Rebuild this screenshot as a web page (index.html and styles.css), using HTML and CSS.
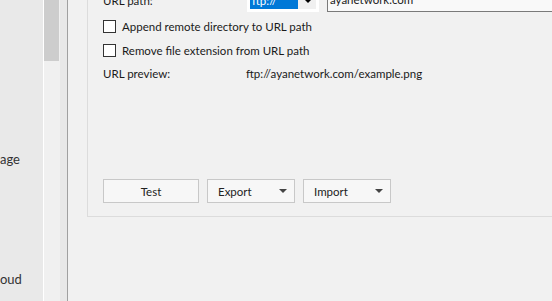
FILE: index.html
```html
<!DOCTYPE html>
<html lang="en">
<head>
    <meta charset="UTF-8">
    <meta name="viewport" content="width=device-width, initial-scale=1.0">
    <title>Uploader settings</title>
    <link rel="stylesheet" href="styles.css">
</head>
<body>
    <div class="window">
        <div class="sidebar">
            <div class="nav-item first">age</div>
            <div class="nav-item">oud</div>
        </div>
        <div class="scrollbar">
            <div class="thumb"></div>
        </div>
        <div class="gutter"></div>

        <div class="main">
            <div class="group">
                <div class="row url-row">
                    <span class="label">URL path:</span>
                    <div class="combo">
                        <span class="combo-value">ftp://</span>
                        <span class="combo-arrow"></span>
                    </div>
                    <div class="textbox">ayanetwork.com</div>
                </div>

                <label class="check-row">
                    <span class="checkbox"></span>
                    Append remote directory to URL path
                </label>
                <label class="check-row">
                    <span class="checkbox"></span>
                    Remove file extension from URL path
                </label>

                <div class="row preview-row">
                    <span class="label">URL preview:</span>
                    <span class="preview">ftp://ayanetwork.com/example.png</span>
                </div>

                <div class="actions">
                    <button class="btn test">Test</button>
                    <button class="btn menu">Export <span class="caret"></span></button>
                    <button class="btn menu">Import <span class="caret"></span></button>
                </div>
            </div>
        </div>
    </div>
</body>
</html>
```

FILE: styles.css
```css
* {
    margin: 0;
    padding: 0;
    box-sizing: border-box;
}

body {
    font-family: 'Lato', 'Open Sans', sans-serif;
    font-size: 11.5px;
    color: #1a1a1a;
    background: #f1f1f1;
    overflow: hidden;
}

.window {
    display: flex;
    height: 301px;
}

/* left list, scrolled so only the ends of the names show */
.sidebar {
    width: 44px;
    background: #e9e9e9;
    border-right: 1px solid #ffffff;
    overflow: hidden;
    font-size: 13px;
    color: #333;
}

.nav-item {
    height: 120px;
    line-height: 18px;
    white-space: nowrap;
}

.nav-item.first {
    margin-top: 150px;
}

.scrollbar {
    width: 16px;
    background: #f0f0f0;
}

.thumb {
    width: 15px;
    height: 61px;
    background: #cdcdcd;
}

.gutter {
    width: 8px;
    background: #e8e8e8;
    border-right: 1px solid #a0a0a0;
}

.main {
    flex: 1;
    padding: 0 0 0 19px;
    overflow: hidden;
}

.group {
    margin-top: -20px;
    width: 520px;
    border: 1px solid #dcdcdc;
    padding: 8px 0 13px 15px;
}

.row {
    display: flex;
    align-items: center;
}

.label {
    width: 143px;
}

.url-row {
    height: 23px;
}

.combo {
    width: 72px;
    height: 23px;
    margin-left: 1px;
    display: flex;
    align-items: center;
    background: #ffffff;
    border: 1px solid #ffffff;
    padding: 2px;
}

.combo-value {
    flex: 1;
    height: 100%;
    background: #0078d7;
    color: #ffffff;
    line-height: 17px;
    padding-left: 2px;
}

.combo-arrow {
    width: 18px;
    height: 100%;
    background: #f0f0f0;
    position: relative;
}

.combo-arrow::after {
    content: "";
    position: absolute;
    left: 6px;
    top: 7px;
    border-left: 4px solid transparent;
    border-right: 4px solid transparent;
    border-top: 4px solid #000;
}

.textbox {
    margin-left: 8px;
    flex: 1;
    height: 22px;
    background: #f9f9f9;
    border: 1px solid #7a7a7a;
    line-height: 18px;
    padding-left: 2px;
}

.check-row {
    display: flex;
    align-items: center;
    height: 17px;
    margin-top: 6px;
}

.check-row + .check-row {
    margin-top: 7px;
}

.checkbox {
    width: 13px;
    height: 13px;
    border: 1px solid #333;
    background: #ffffff;
    margin-right: 6px;
}

.preview-row {
    height: 17px;
    margin-top: 6px;
}

.actions {
    display: flex;
    gap: 8px;
    margin-top: 97px;
}

.btn {
    font-family: inherit;
    font-size: 11.5px;
    color: #222;
    background: #f7f7f7;
    border: 1px solid #c8c8c8;
    height: 24px;
}

.btn.test {
    width: 96px;
}

.btn.menu {
    width: 88px;
    display: flex;
    align-items: center;
    justify-content: space-between;
    padding: 0 7px 0 10px;
}

.caret {
    border-left: 4px solid transparent;
    border-right: 4px solid transparent;
    border-top: 4px solid #444;
}
```
